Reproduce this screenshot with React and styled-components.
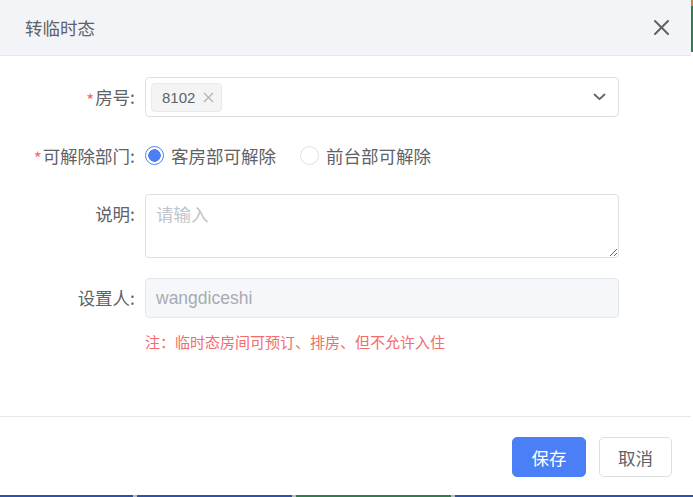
import React, { useState } from "react";
import styled, { createGlobalStyle } from "styled-components";

const GlobalStyle = createGlobalStyle`
  html, body {
    margin: 0;
    padding: 0;
    background: #ffffff;
  }
  body {
    font-family: "Liberation Sans", "Noto Sans CJK SC", sans-serif;
  }
`;

const Page = styled.div`
  width: 693px;
  height: 497px;
  display: flex;
  flex-direction: column;
  overflow: hidden;
`;

const Top = styled.div`
  display: flex;
`;

const RightEdge = styled.div`
  width: 2px;
  background: linear-gradient(#c98a3b 0 6px, #2f7d4f 6px 52px, #ffffff 52px);
`;

const BottomEdge = styled.div`
  height: 2px;
  background: linear-gradient(
    90deg,
    #2a52a8 0 133px,
    #b8bcc4 133px 137px,
    #2a52a8 137px 292px,
    #b8bcc4 292px 296px,
    #2f7d4f 296px 451px,
    #b8bcc4 451px 455px,
    #2a52a8 455px
  );
`;

const Dialog = styled.div`
  width: 691px;
  height: 495px;
  background: #ffffff;
  display: flex;
  flex-direction: column;
`;

const Header = styled.div`
  height: 55px;
  background: #f3f4f8;
  border-bottom: 1px solid #e4e7ed;
  display: flex;
  align-items: center;
  justify-content: space-between;
  padding: 0 22px 0 25px;
`;

const Title = styled.span`
  font-size: 17.5px;
  color: #606266;
  font-family: "Noto Sans CJK SC", sans-serif;
`;

const CloseButton = styled.button`
  width: 16px;
  height: 16px;
  padding: 0;
  border: none;
  background: none;
  display: flex;
  align-items: center;
  justify-content: center;
  cursor: pointer;
`;

const Body = styled.div`
  flex: 1;
  padding: 21px 0 0;
  display: grid;
  grid-template-columns: 145px 474px;
  grid-auto-rows: min-content;
  row-gap: 20px;
`;

const Label = styled.label`
  box-sizing: border-box;
  padding-right: 10px;
  display: flex;
  align-items: ${(p) => (p.$top ? "flex-start" : "center")};
  padding-top: ${(p) => (p.$top ? "9px" : "0")};
  justify-content: flex-end;
  font-size: 17.5px;
  color: #606266;
  font-family: "Noto Sans CJK SC", sans-serif;
  line-height: 22px;
`;

const Required = styled.span`
  color: #f56c6c;
  font-size: 17px;
  margin-right: 1px;
  line-height: 1;
  padding-top: 4px;
`;

const SelectBox = styled.div`
  box-sizing: border-box;
  height: 40px;
  border: 1px solid #dcdfe6;
  border-radius: 4px;
  display: flex;
  align-items: center;
  padding: 0 6px 0 5px;
`;

const Tag = styled.span`
  box-sizing: border-box;
  height: 29px;
  display: inline-flex;
  align-items: center;
  gap: 8px;
  padding: 0 7px 0 10px;
  background: #f4f4f5;
  border: 1px solid #e9e9eb;
  border-radius: 4px;
  font-size: 15px;
  color: #606266;
`;

const TagClose = styled.span`
  display: flex;
`;

const Arrow = styled.span`
  margin-left: auto;
  display: flex;
  padding-right: 6px;
`;

const RadioGroup = styled.div`
  height: 37px;
  display: flex;
  align-items: center;
  gap: 24px;
`;

const RadioItem = styled.label`
  display: flex;
  align-items: center;
  gap: 7px;
  cursor: pointer;
  font-size: 17.5px;
  color: #606266;
  font-family: "Noto Sans CJK SC", sans-serif;
`;

const RadioDot = styled.span`
  box-sizing: border-box;
  width: 19px;
  height: 19px;
  border-radius: 50%;
  border: 1px solid ${(p) => (p.$checked ? "#4a7ff7" : "#dcdfe6")};
  background: ${(p) =>
    p.$checked
      ? "radial-gradient(circle, #4a7ff7 0 6px, #ffffff 6.5px)"
      : "#ffffff"};
`;

const TextArea = styled.textarea`
  box-sizing: border-box;
  height: 64px;
  width: 100%;
  margin: 0;
  display: block;
  border: 1px solid #dcdfe6;
  border-radius: 4px;
  padding: 8px 10px;
  font-size: 17.5px;
  line-height: 22px;
  color: #606266;
  font-family: "Noto Sans CJK SC", sans-serif;
  resize: vertical;
  outline: none;
  &::placeholder {
    color: #c0c4cc;
  }
`;

const Input = styled.input`
  box-sizing: border-box;
  height: 40px;
  width: 100%;
  margin: 0;
  border: 1px solid #e4e7ed;
  border-radius: 4px;
  padding: 0 10px;
  background: #f5f7fa;
  font-size: 17.5px;
  color: #a8abb2;
  -webkit-text-fill-color: #a8abb2;
  font-family: "Liberation Sans", "Noto Sans CJK SC", sans-serif;
  outline: none;
`;

const Note = styled.div`
  grid-column: 2;
  margin-top: -6px;
  font-size: 15px;
  line-height: 20px;
  color: #f56c6c;
  font-family: "Noto Sans CJK SC", sans-serif;
`;

const Footer = styled.div`
  height: 79px;
  border-top: 1px solid #e4e7ed;
  display: flex;
  justify-content: flex-end;
  align-items: flex-start;
  gap: 13px;
  padding: 20px 19px 0 0;
  box-sizing: border-box;
`;

const Button = styled.button`
  box-sizing: border-box;
  width: ${(p) => p.$w};
  height: 40px;
  border-radius: 5px;
  border: 1px solid ${(p) => (p.$primary ? "#4a7ff7" : "#dcdfe6")};
  background: ${(p) => (p.$primary ? "#4a7ff7" : "#ffffff")};
  color: ${(p) => (p.$primary ? "#ffffff" : "#606266")};
  font-size: 17.5px;
  font-family: "Noto Sans CJK SC", sans-serif;
  cursor: pointer;
`;

export default function App() {
  const [dept, setDept] = useState("room");

  return (
    <Page>
      <GlobalStyle />
      <Top>
        <Dialog>
          <Header>
            <Title>转临时态</Title>
            <CloseButton aria-label="关闭">
              <svg width="15" height="15" viewBox="0 0 15 15">
                <path d="M1 1L14 14M14 1L1 14" stroke="#606266" strokeWidth="2" strokeLinecap="round" />
              </svg>
            </CloseButton>
          </Header>

          <Body>
            <Label>
              <Required>*</Required>房号:
            </Label>
            <SelectBox>
              <Tag>
                8102
                <TagClose>
                  <svg width="11" height="11" viewBox="0 0 11 11">
                    <path d="M1 1L10 10M10 1L1 10" stroke="#b1b3b8" strokeWidth="1.3" />
                  </svg>
                </TagClose>
              </Tag>
              <Arrow>
                <svg width="13" height="8" viewBox="0 0 13 8">
                  <path d="M1.5 1.5L6.5 6.2L11.5 1.5" fill="none" stroke="#606266" strokeWidth="1.8" strokeLinecap="round" strokeLinejoin="round" />
                </svg>
              </Arrow>
            </SelectBox>

            <Label>
              <Required>*</Required>可解除部门:
            </Label>
            <RadioGroup>
              <RadioItem onClick={() => setDept("room")}>
                <RadioDot $checked={dept === "room"} />
                客房部可解除
              </RadioItem>
              <RadioItem onClick={() => setDept("front")}>
                <RadioDot $checked={dept === "front"} />
                前台部可解除
              </RadioItem>
            </RadioGroup>

            <Label $top>说明:</Label>
            <TextArea placeholder="请输入" />

            <Label>设置人:</Label>
            <Input value="wangdiceshi" disabled readOnly />

            <Note>注：临时态房间可预订、排房、但不允许入住</Note>
          </Body>

          <Footer>
            <Button $primary $w="74px">保存</Button>
            <Button $w="73px">取消</Button>
          </Footer>
        </Dialog>
        <RightEdge />
      </Top>
      <BottomEdge />
    </Page>
  );
}
